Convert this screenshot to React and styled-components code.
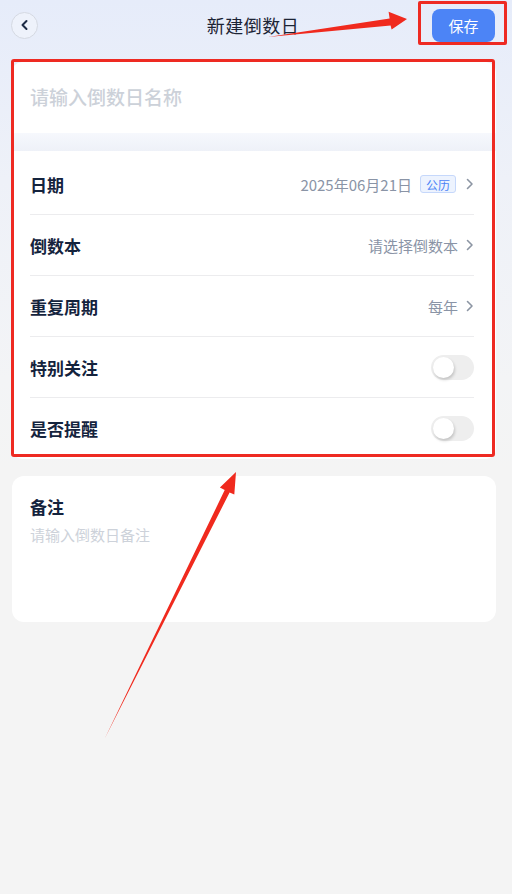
import React from 'react';
import styled, { createGlobalStyle } from 'styled-components';

const GlobalStyle = createGlobalStyle`
  * { box-sizing: border-box; }
  body {
    margin: 0;
    background: #f4f4f4;
    font-family: 'Noto Sans CJK SC', 'Noto Sans', sans-serif;
  }
`;

const rows = [
  { label: '日期', value: '2025年06月21日', tag: '公历', arrow: true },
  { label: '倒数本', value: '请选择倒数本', arrow: true },
  { label: '重复周期', value: '每年', arrow: true },
  { label: '特别关注', toggle: true },
  { label: '是否提醒', toggle: true },
];

function Chevron() {
  return (
    <svg width="8" height="12" viewBox="0 0 8 12">
      <path d="M1.5 1.5 L6 6 L1.5 10.5" fill="none" stroke="#8c95a3" strokeWidth="1.6" strokeLinecap="round" strokeLinejoin="round" />
    </svg>
  );
}

export default function App() {
  return (
    <Page>
      <GlobalStyle />
      <Header>
        <BackButton>
          <svg width="12" height="12" viewBox="0 0 12 12">
            <path d="M7.5 2 L3.5 6 L7.5 10" fill="none" stroke="#1c2a45" strokeWidth="2" strokeLinecap="round" strokeLinejoin="round" />
          </svg>
        </BackButton>
        <Title>新建倒数日</Title>
        <SaveWrap>
          <SaveButton>保存</SaveButton>
        </SaveWrap>
      </Header>

      <Content>
        <NameCard>
          <NamePlaceholder>请输入倒数日名称</NamePlaceholder>
        </NameCard>

        <Spacer />

        <ListCard>
          {rows.map((row, i) => (
            <Row key={row.label} last={i === rows.length - 1}>
              <Label>{row.label}</Label>
              <Right>
                {row.value && <Value>{row.value}</Value>}
                {row.tag && <Tag>{row.tag}</Tag>}
                {row.arrow && <Chevron />}
                {row.toggle && (
                  <Switch>
                    <Knob />
                  </Switch>
                )}
              </Right>
            </Row>
          ))}
        </ListCard>

        <NoteCard>
          <NoteTitle>备注</NoteTitle>
          <NotePlaceholder>请输入倒数日备注</NotePlaceholder>
        </NoteCard>
      </Content>

      <HighlightBox />
      <SaveHighlight />
      <Arrows width="512" height="894" viewBox="0 0 512 894">
        <polygon
          points="268,37 389.6,18.6 388.6,11.7 407,19 391.6,29.5 390.6,25.6"
          fill="#f02a1e"
        />
        <polygon
          points="105,738 224.7,490.1 219.9,487.6 236,472 234.3,494.5 229.6,492.5"
          fill="#f02a1e"
        />
      </Arrows>
    </Page>
  );
}

const Page = styled.div`
  position: relative;
  width: 512px;
  min-height: 894px;
  background: linear-gradient(180deg, #e6ecfa 0px, #eef1f8 180px, #f3f4f6 380px, #f4f4f4 470px);
  overflow: hidden;
`;

const Header = styled.div`
  height: 50px;
  padding: 0 17px 0 11px;
  display: grid;
  grid-template-columns: 1fr auto 1fr;
  align-items: center;
`;

const BackButton = styled.div`
  width: 27px;
  height: 27px;
  border-radius: 50%;
  border: 1px solid #d5d9e2;
  background: #eef2fb;
  display: flex;
  align-items: center;
  justify-content: center;
`;

const Title = styled.div`
  font-size: 18px;
  color: #1c2435;
  letter-spacing: 0.5px;
`;

const SaveWrap = styled.div`
  display: flex;
  justify-content: flex-end;
`;

const SaveButton = styled.div`
  width: 63px;
  height: 33px;
  border-radius: 8px;
  background: #4c84f6;
  color: #fff;
  font-size: 15px;
  display: flex;
  align-items: center;
  justify-content: center;
`;

const Content = styled.div`
  padding: 12px 16px 0 12px;
  display: flex;
  flex-direction: column;
`;

const NameCard = styled.div`
  height: 71px;
  background: #fff;
  border-radius: 10px 10px 0 0;
  padding: 0 18px;
  display: flex;
  align-items: center;
`;

const NamePlaceholder = styled.div`
  font-size: 19px;
  font-weight: 500;
  color: #ccd1d9;
  margin-top: -2px;
`;

const Spacer = styled.div`
  height: 18px;
  background: linear-gradient(180deg, #f6f8fd, #eef1f8);
`;

const ListCard = styled.div`
  background: #fff;
  padding: 3px 22px 0 18px;
  border-radius: 0 0 10px 10px;
`;

const Row = styled.div`
  height: 61px;
  display: flex;
  align-items: center;
  justify-content: space-between;
  border-bottom: ${(p) => (p.last ? 'none' : '1px solid #ececee')};
`;

const Label = styled.div`
  font-size: 17px;
  font-weight: 600;
  color: #14233d;
`;

const Right = styled.div`
  display: flex;
  align-items: center;
  gap: 8px;
`;

const Value = styled.div`
  font-size: 15px;
  color: #8a94a6;
`;

const Tag = styled.div`
  height: 18px;
  padding: 0 5px;
  border: 1px solid #c6d8fb;
  border-radius: 3px;
  background: #edf3fe;
  color: #4c84f6;
  font-size: 12px;
  display: flex;
  align-items: center;
  margin-right: 2px;
`;

const Switch = styled.div`
  width: 43px;
  height: 25px;
  border-radius: 13px;
  background: #eeeeee;
  display: flex;
  align-items: center;
  padding-left: 2px;
`;

const Knob = styled.div`
  width: 21px;
  height: 21px;
  border-radius: 50%;
  background: #fff;
  box-shadow: 1px 2px 3px rgba(0, 0, 0, 0.18);
`;

const NoteCard = styled.div`
  margin-top: 17px;
  height: 146px;
  background: #fff;
  border-radius: 12px;
  padding: 20px 18px;
`;

const NoteTitle = styled.div`
  font-size: 17px;
  font-weight: 600;
  color: #14233d;
  line-height: 22px;
`;

const NotePlaceholder = styled.div`
  margin-top: 7px;
  font-size: 15px;
  color: #cdd2da;
  line-height: 20px;
`;

const HighlightBox = styled.div`
  position: absolute;
  left: 11px;
  top: 59px;
  width: 484px;
  height: 398px;
  border: 3px solid #ee2a22;
  border-radius: 3px;
  pointer-events: none;
`;

const SaveHighlight = styled.div`
  position: absolute;
  left: 418px;
  top: 1px;
  width: 89px;
  height: 44px;
  border: 3px solid #ee2a22;
  border-radius: 2px;
  pointer-events: none;
`;

const Arrows = styled.svg`
  position: absolute;
  left: 0;
  top: 0;
  pointer-events: none;
`;
